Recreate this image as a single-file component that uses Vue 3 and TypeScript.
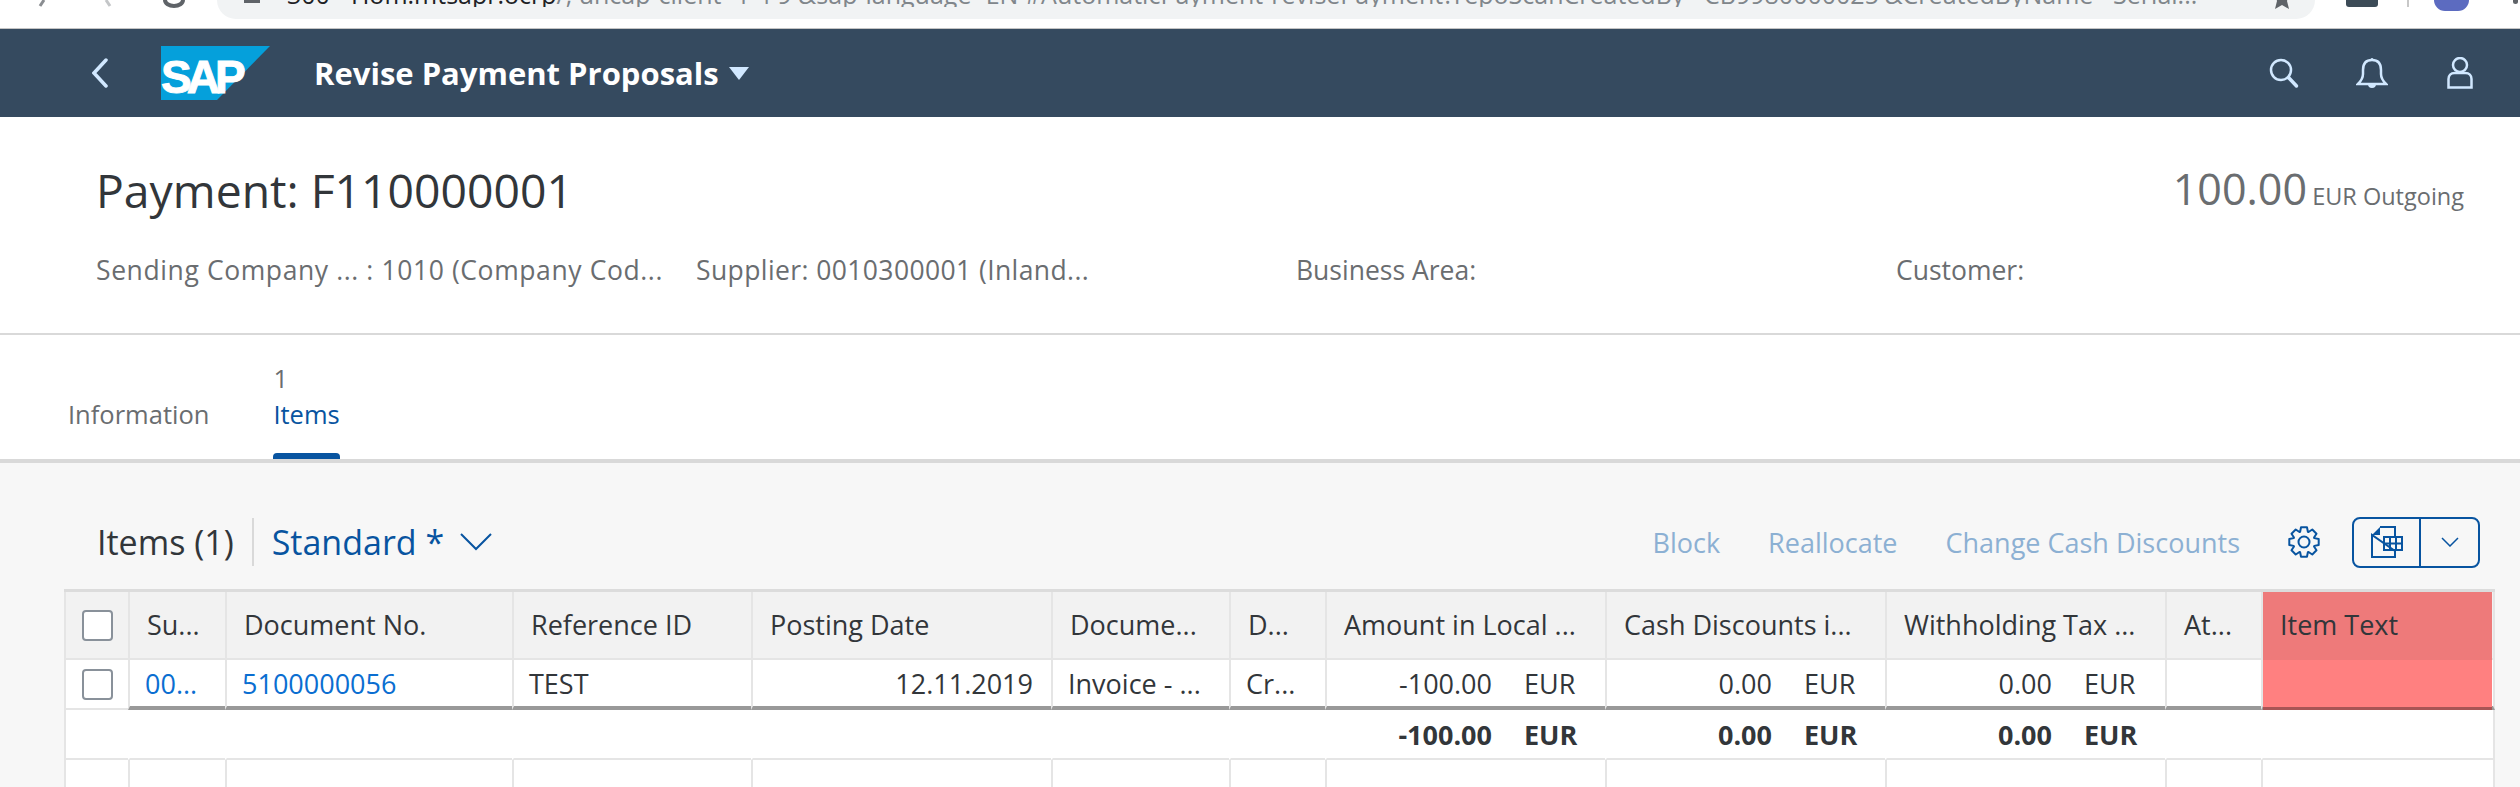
<template>
  <div class="page">
    <div class="browser-bar">
      <div class="nav-icons">
        <svg class="nav-icon" viewBox="0 0 24 8"><path d="M14 0l-4 6" /></svg>
        <svg class="nav-icon light" viewBox="0 0 24 8"><path d="M10 0l4 6" /></svg>
        <svg class="nav-icon dark" viewBox="0 0 24 8"><path d="M3 0a9 6 0 0 0 18 0" /></svg>
      </div>
      <div class="url-pill">
        <span class="lock"></span>
        <span class="url-text"><b>300 - Hom.mtsapr.ocrp</b>/, uncap-client=1 4 9 &amp;sap-language=EN #AutomaticPayment-revisePayment?repoScanCreatedBy='CB9980000025'&amp;CreatedByName='Serial...</span>
        <svg class="star" viewBox="0 0 24 16"><path d="M6 0h12l-1 4 2 8-7-4-7 4 2-8z" /></svg>
      </div>
      <div class="ext-icon"></div>
      <div class="bar-sep"></div>
      <div class="avatar"></div>
      <div class="menu-dot"></div>
    </div>

    <header class="shell">
      <svg class="back" viewBox="0 0 16 30"><path d="M14 2 2 15l12 13" /></svg>
      <svg class="logo" viewBox="0 0 109 54">
        <polygon points="0,0 109,0 56,54 0,54" fill="#05a0db" />
      </svg>
      <span class="logo-text">SAP</span>
      <div class="app-title">Revise Payment Proposals</div>
      <span class="title-caret"></span>
      <div class="shell-actions">
        <svg class="shell-icon" viewBox="0 0 32 32">
          <circle cx="13" cy="13" r="10" />
          <path class="handle" d="m20.500 20.500 8 8.500" />
        </svg>
        <svg class="shell-icon" viewBox="0 0 32 32">
          <path d="M16 3c-6 0-9 4-9 10v4c0 4-2 7-5 10h28c-3-3-5-6-5-10v-4c0-6-3-10-9-10z" />
          <path class="solid" d="M12 27a4 4 0 0 0 8 0zM14.500 3a1.500 2 0 0 1 3 0z" />
        </svg>
        <svg class="shell-icon" viewBox="0 0 32 32">
          <circle cx="16" cy="8" r="7" />
          <path d="M4.500 30.500V22c0-3.500 2.500-6 6-6h11c3.500 0 6 2.500 6 6v8.500z" />
        </svg>
      </div>
    </header>

    <section class="object-header">
      <div class="title-row">
        <h1>Payment: F110000001</h1>
        <div class="amount"><span class="amount-num">100.00</span> <span class="amount-unit">EUR Outgoing</span></div>
      </div>
      <div class="attrs">
        <span v-for="attr in attrs" :key="attr">{{ attr }}</span>
      </div>
    </section>

    <nav class="tabs">
      <div class="tab">
        <span class="tab-count">&nbsp;</span>
        <span class="tab-label">Information</span>
      </div>
      <div class="tab active">
        <span class="tab-count">1</span>
        <span class="tab-label">Items</span>
      </div>
    </nav>

    <main class="content">
      <div class="toolbar">
        <span class="items-title">Items (1)</span>
        <span class="sep"></span>
        <span class="variant">Standard *</span>
        <svg class="variant-chevron" viewBox="0 0 32 18"><path d="M1 1l15 15L31 1" /></svg>
        <div class="actions">
          <span>Block</span>
          <span>Reallocate</span>
          <span>Change Cash Discounts</span>
          <svg class="gear" viewBox="0 0 32 32">
            <circle cx="16" cy="16" r="5.500" />
            <path :d="gearPath" />
          </svg>
          <div class="export-btn">
            <span class="export-main">
              <svg class="export-icon" viewBox="0 0 32 32">
                <path class="line" d="M9 1h15v9M24 25v6H1V9z" />
                <path class="fill" d="M1 9l8-8v8z" />
                <path class="line" d="M13 11h18v13H13zM13 17.500h18M19 11v13M25 11v13" />
              </svg>
            </span>
            <span class="export-arrow">
              <svg viewBox="0 0 18 10"><path d="M1 1l8 8 8-8" /></svg>
            </span>
          </div>
        </div>
      </div>

      <div class="table-wrap">
        <table class="grid">
          <colgroup>
            <col v-for="w in colWidths" :key="w.id" :style="{ width: w.px + 'px' }" />
          </colgroup>
          <thead>
            <tr>
              <th class="sel"><span class="check"></span></th>
              <th v-for="c in columns" :key="c">{{ c }}</th>
            </tr>
          </thead>
          <tbody>
            <tr class="data">
              <td class="sel"><span class="check"></span></td>
              <td class="link">00...</td>
              <td class="link">5100000056</td>
              <td>TEST</td>
              <td class="right">12.11.2019</td>
              <td>Invoice - ...</td>
              <td>Cr...</td>
              <td class="right"><span class="num">-100.00</span><span class="cur">EUR</span></td>
              <td class="right"><span class="num">0.00</span><span class="cur">EUR</span></td>
              <td class="right"><span class="num">0.00</span><span class="cur">EUR</span></td>
              <td></td>
              <td></td>
            </tr>
            <tr class="total">
              <td></td><td></td><td></td><td></td><td></td><td></td><td></td>
              <td class="right"><span class="num">-100.00</span><span class="cur">EUR</span></td>
              <td class="right"><span class="num">0.00</span><span class="cur">EUR</span></td>
              <td class="right"><span class="num">0.00</span><span class="cur">EUR</span></td>
              <td></td>
              <td></td>
            </tr>
            <tr class="filler">
              <td v-for="w in colWidths" :key="w.id"></td>
            </tr>
          </tbody>
        </table>
        <div class="highlight highlight-head">Item Text</div>
        <div class="highlight highlight-row"></div>
      </div>
    </main>
  </div>
</template>

<script setup lang="ts">
const attrs: string[] = [
  'Sending Company ... : 1010 (Company Cod...',
  'Supplier: 0010300001 (Inland...',
  'Business Area:',
  'Customer:',
]

const columns: string[] = [
  'Su...',
  'Document No.',
  'Reference ID',
  'Posting Date',
  'Docume...',
  'D...',
  'Amount in Local ...',
  'Cash Discounts i...',
  'Withholding Tax ...',
  'At...',
  'Item Text',
]

const colWidths = [64, 97, 287, 239, 300, 178, 96, 280, 280, 280, 96, 234].map((px, id) => ({ id, px }))

// eight teeth, walked round the centre of the 32x32 box
const gearPath = (() => {
  const pts: string[] = []
  for (let i = 0; i < 8; i++) {
    const a = (i * Math.PI) / 4
    const corners: [number, number][] = [
      [11, a - 0.36],
      [15, a - 0.2],
      [15, a + 0.2],
      [11, a + 0.36],
    ]
    for (const [r, t] of corners) {
      pts.push(`${(16 + r * Math.cos(t)).toFixed(2)} ${(16 + r * Math.sin(t)).toFixed(2)}`)
    }
  }
  return `M${pts.join('L')}z`
})()
</script>

<style>
html,
body {
  margin: 0;
  background: #fff;
  overflow: hidden;
}
</style>

<style scoped>
.page {
  width: 2520px;
  height: 787px;
  overflow: hidden;
  display: flex;
  flex-direction: column;
  font-family: "Open Sans", "Noto Sans", sans-serif;
  color: #32363a;
}

.browser-bar {
  height: 28px;
  flex: none;
  display: flex;
  align-items: flex-start;
  background: #fff;
  border-bottom: 1px solid #c4c4c4;
}

.nav-icons {
  width: 217px;
  flex: none;
  display: flex;
  gap: 42px;
  padding-left: 30px;
  box-sizing: border-box;
}

.nav-icon {
  width: 24px;
  height: 8px;
  fill: none;
  stroke: #8a8d91;
  stroke-width: 3;
}

.nav-icon.light {
  stroke: #c4c6c8;
}

.nav-icon.dark {
  stroke: #5f6368;
  stroke-width: 4;
}

.url-pill {
  width: 2098px;
  height: 19px;
  flex: none;
  background: #f1f3f4;
  border-radius: 0 0 24px 24px;
  overflow: hidden;
  display: flex;
  align-items: flex-start;
  padding-left: 27px;
  box-sizing: border-box;
}

.lock {
  width: 16px;
  height: 3px;
  margin-right: 27px;
  flex: none;
  background: #5f6368;
}

.url-text {
  flex: 1;
  font-size: 25px;
  line-height: 25px;
  margin-top: -18px;
  color: #80868b;
  white-space: nowrap;
  overflow: hidden;
}

.url-text b {
  font-weight: 400;
  color: #202124;
}

.star {
  width: 24px;
  height: 16px;
  fill: #5f6368;
  margin: -3px 21px 0 24px;
  flex: none;
}

.ext-icon {
  width: 32px;
  height: 7px;
  margin-left: 31px;
  background: #3c4b57;
  border-radius: 0 0 3px 3px;
}

.bar-sep {
  width: 2px;
  height: 7px;
  margin-left: 29px;
  background: #c8c8c8;
}

.avatar {
  width: 35px;
  height: 11px;
  margin-left: 25px;
  background: #5c6bc0;
  border-radius: 0 0 18px 18px;
}

.menu-dot {
  width: 5px;
  height: 4px;
  margin-left: auto;
  margin-right: 2px;
  background: #5f6368;
  border-radius: 0 0 3px 3px;
}

.shell {
  height: 88px;
  flex: none;
  position: relative;
  display: flex;
  align-items: center;
  background: #354a5f;
  color: #fff;
}

.back {
  width: 16px;
  height: 30px;
  margin-left: 92px;
  fill: none;
  stroke: #d1e8ff;
  stroke-width: 3.500;
  stroke-linecap: round;
}

.logo {
  width: 109px;
  height: 54px;
  margin-left: 53px;
}

.logo-text {
  position: absolute;
  left: 161px;
  top: 25px;
  width: 90px;
  font-family: "Liberation Sans", sans-serif;
  font-size: 46px;
  line-height: 46px;
  font-weight: 700;
  letter-spacing: -5px;
  color: #fff;
  -webkit-text-stroke: 1px #fff;
}

.app-title {
  margin-left: 44px;
  font-size: 31px;
  font-weight: 700;
  white-space: nowrap;
}

.title-caret {
  margin-left: 10px;
  width: 0;
  height: 0;
  border-left: 10px solid transparent;
  border-right: 10px solid transparent;
  border-top: 13px solid #d1e8ff;
}

.shell-actions {
  margin-left: auto;
  margin-right: 44px;
  display: flex;
  gap: 56px;
}

.shell-icon {
  width: 32px;
  height: 32px;
  fill: none;
  stroke: #d1e8ff;
  stroke-width: 2.500;
}

.shell-icon .handle {
  stroke-width: 3.500;
  stroke-linecap: round;
}

.shell-icon .solid {
  fill: #d1e8ff;
  stroke: none;
}

.object-header {
  height: 218px;
  flex: none;
  box-sizing: border-box;
  padding: 44px 56px 0 96px;
  background: #fff;
  border-bottom: 2px solid #d9d9d9;
}

.title-row {
  display: flex;
  justify-content: space-between;
  align-items: flex-start;
  height: 60px;
}

h1 {
  margin: 0;
  font-size: 46.300px;
  line-height: 60px;
  font-weight: 400;
  color: #32363a;
}

.amount {
  color: #6a6d70;
  line-height: 60px;
  margin-top: -2px;
}

.amount-num {
  font-size: 43px;
}

.amount-unit {
  font-size: 23.500px;
  margin-left: 1px;
}

.attrs {
  display: grid;
  grid-template-columns: repeat(4, 600px);
  margin-top: 31px;
  font-size: 26.500px;
  line-height: 36px;
  color: #6a6d70;
  white-space: nowrap;
}

.attrs span:nth-child(1) {
  letter-spacing: 0.6px;
}

.attrs span:nth-child(2) {
  letter-spacing: 0.4px;
}

.tabs {
  height: 128px;
  flex: none;
  box-sizing: border-box;
  display: flex;
  gap: 64px;
  padding-left: 68px;
  background: #fff;
  border-bottom: 4px solid #d9d9d9;
}

.tab {
  position: relative;
  display: flex;
  flex-direction: column;
  padding-top: 25px;
  font-size: 25.500px;
  line-height: 36px;
  color: #6a6d70;
}

.tab-count {
  height: 36px;
}

.tab.active .tab-label {
  color: #0854a0;
}

.tab.active::after {
  content: "";
  position: absolute;
  left: 0;
  right: 0;
  bottom: 0;
  height: 6px;
  background: #0854a0;
  border-radius: 4px 4px 0 0;
}

.content {
  flex: 1;
  min-height: 0;
  overflow: hidden;
  background: #f7f7f7;
}

.toolbar {
  height: 127px;
  box-sizing: border-box;
  display: flex;
  align-items: center;
  padding: 31px 40px 0 97px;
}

.items-title {
  font-size: 34px;
  color: #32363a;
}

.sep {
  width: 2px;
  height: 48px;
  margin: 0 18px 0 18px;
  background: #d9d9d9;
}

.variant {
  font-size: 34px;
  color: #0854a0;
}

.variant-chevron {
  width: 32px;
  height: 18px;
  margin-left: 16px;
  fill: none;
  stroke: #0854a0;
  stroke-width: 2;
}

.actions {
  margin-left: auto;
  display: flex;
  align-items: center;
  font-size: 27px;
  color: #8cb0d3;
}

.actions > span {
  margin-right: 48px;
}

.gear {
  width: 32px;
  height: 32px;
  fill: none;
  stroke: #0854a0;
  stroke-width: 2;
  stroke-linejoin: round;
}

.export-btn {
  width: 128px;
  height: 51px;
  margin-left: 32px;
  box-sizing: border-box;
  display: flex;
  border: 2px solid #0854a0;
  border-radius: 8px;
}

.export-main {
  width: 65px;
  display: flex;
  align-items: center;
  justify-content: center;
  border-right: 2px solid #0854a0;
}

.export-icon {
  width: 32px;
  height: 32px;
  fill: none;
}

.export-icon .line {
  stroke: #0854a0;
  stroke-width: 2;
}

.export-icon .fill {
  fill: #0854a0;
}

.export-arrow {
  flex: 1;
  display: flex;
  align-items: center;
  justify-content: center;
}

.export-arrow svg {
  width: 18px;
  height: 10px;
  fill: none;
  stroke: #0854a0;
  stroke-width: 1.500;
}

.table-wrap {
  position: relative;
  margin-left: 64px;
  margin-top: -1px;
  width: 2431px;
  background: #fff;
}

.grid {
  width: 2431px;
  table-layout: fixed;
  border-collapse: separate;
  border-spacing: 0;
  border-top: 3px solid #dcdcdc;
  font-size: 27px;
}

.grid th,
.grid td {
  box-sizing: border-box;
  padding: 0 0 0 15px;
  border-left: 2px solid #e5e5e5;
  white-space: nowrap;
  overflow: hidden;
}

.grid td:last-child,
.grid th:last-child {
  border-right: 2px solid #e5e5e5;
}

.grid th {
  height: 68px;
  padding-left: 17px;
  padding-bottom: 2px;
  background: #f2f2f2;
  border-bottom: 2px solid #e5e5e5;
  font-weight: 400;
  text-align: left;
  color: #32363a;
}

.grid .sel {
  padding: 0;
  text-align: center;
}

.check {
  display: block;
  box-sizing: border-box;
  width: 31px;
  height: 31px;
  margin-left: 16px;
  background: #fff;
  border: 2px solid #89919a;
  border-radius: 4px;
}

.data td {
  height: 50px;
  border-bottom: 4px solid #999;
  color: #32363a;
}

.data td.sel {
  border-bottom: 2px solid #e5e5e5;
}

.data td.link {
  color: #0a6ed1;
}

.right {
  text-align: right;
}

.grid td.right {
  padding: 0 17px 0 0;
}

.num {
  display: inline-block;
}

.cur {
  display: inline-block;
  width: 64px;
  margin-left: 32px;
  text-align: left;
}

.data td:nth-child(5) {
  padding-right: 18px;
}

.total td {
  height: 50px;
  border-left-color: #fff;
  border-bottom: 2px solid #e5e5e5;
  font-weight: 700;
}

.total td:first-child {
  border-left-color: #e5e5e5;
}

.filler td {
  height: 42px;
}

.highlight {
  position: absolute;
  left: 2199px;
  width: 229px;
  box-sizing: border-box;
}

.highlight-head {
  top: 3px;
  height: 68px;
  padding-left: 17px;
  background: #ee7a7a;
  font-size: 27px;
  line-height: 66px;
  color: #32363a;
}

.highlight-row {
  top: 71px;
  height: 50px;
  background: #ff8080;
  border-bottom: 3px solid #a85555;
}
</style>
